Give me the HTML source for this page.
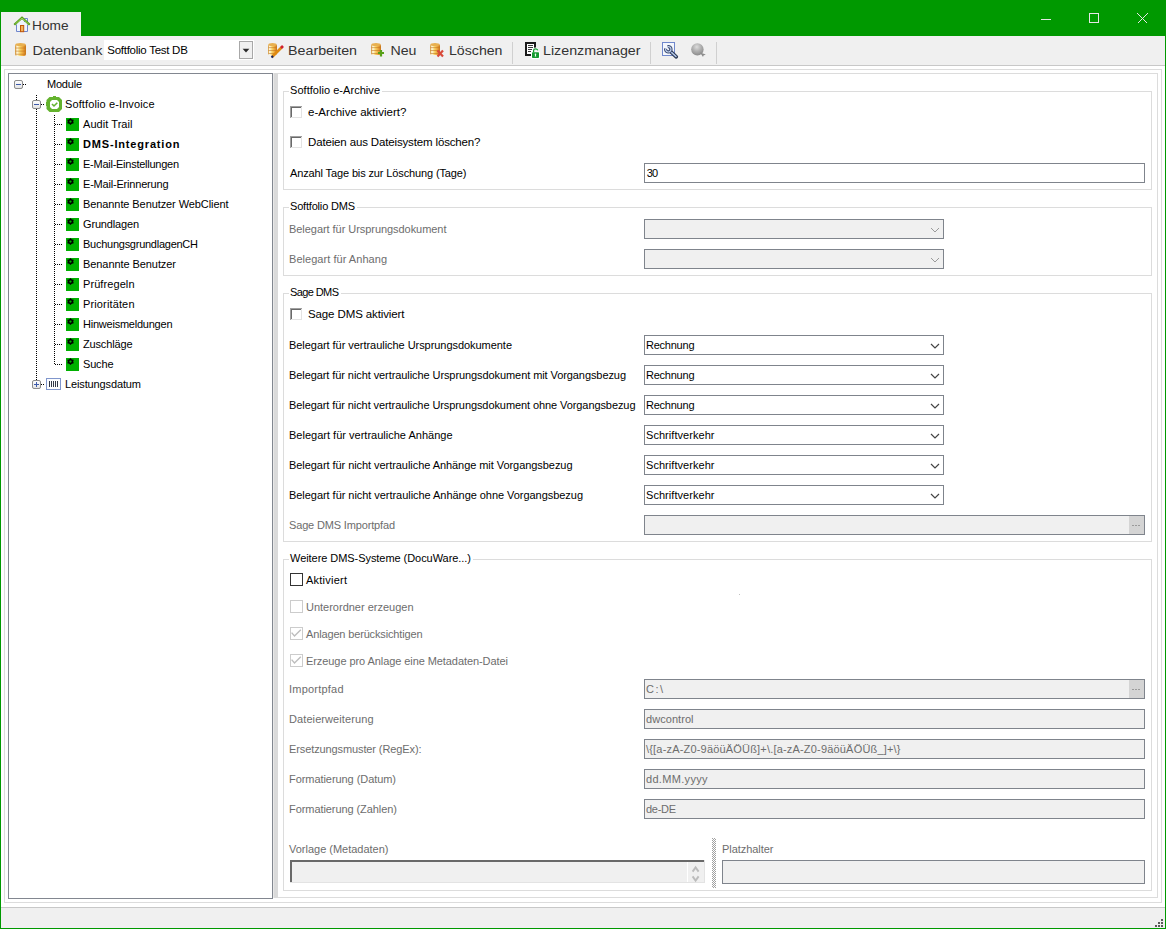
<!DOCTYPE html>
<html><head><meta charset="utf-8"><title>Softfolio</title>
<style>html,body{margin:0;padding:0;width:1166px;height:929px;overflow:hidden;background:#fff}
svg{display:block} text{font-family:"Liberation Sans", sans-serif;white-space:pre}</style></head>
<body><svg width="1166" height="929" viewBox="0 0 1166 929" shape-rendering="crispEdges">
<rect x="0" y="0" width="1166" height="929" fill="#ffffff"/>
<rect x="0" y="0" width="1166" height="36" fill="#009900"/>
<rect x="1" y="12" width="80" height="24" fill="#f0f0f0"/>
<rect x="1041" y="19" width="10" height="1" fill="#e6e6e6"/>
<rect x="1089" y="13" width="10" height="1" fill="#e6e6e6"/>
<rect x="1089" y="22" width="10" height="1" fill="#e6e6e6"/>
<rect x="1089" y="13" width="1" height="10" fill="#e6e6e6"/>
<rect x="1098" y="13" width="1" height="10" fill="#e6e6e6"/>
<path d="M1137.5 13.5 L1147.5 23.5 M1147.5 13.5 L1137.5 23.5" stroke="#e6e6e6" stroke-width="1"/>
<rect x="1" y="36" width="1164" height="29" fill="#f0f0f0"/>
<rect x="1" y="65" width="1164" height="1" fill="#c8c8c8"/>
<rect x="1" y="907" width="1164" height="1" fill="#c8c8c8"/>
<rect x="1" y="908" width="1164" height="20" fill="#f0f0f0"/>
<rect x="0" y="0" width="1" height="929" fill="#009900"/>
<rect x="1165" y="0" width="1" height="929" fill="#009900"/>
<rect x="0" y="928" width="1166" height="1" fill="#009900"/>
<rect x="1161" y="919" width="2" height="2" fill="#5a5a5a"/>
<rect x="1158" y="922" width="2" height="2" fill="#5a5a5a"/>
<rect x="1161" y="922" width="2" height="2" fill="#5a5a5a"/>
<rect x="1155" y="925" width="2" height="2" fill="#5a5a5a"/>
<rect x="1158" y="925" width="2" height="2" fill="#5a5a5a"/>
<rect x="1161" y="925" width="2" height="2" fill="#5a5a5a"/>
<rect x="4" y="69" width="1158" height="1" fill="#dcdcdc"/>
<rect x="4" y="902" width="1158" height="1" fill="#dcdcdc"/>
<rect x="4" y="69" width="1" height="834" fill="#dcdcdc"/>
<rect x="1161" y="69" width="1" height="834" fill="#dcdcdc"/>
<rect x="8" y="73" width="265" height="826" fill="#ffffff"/>
<rect x="8" y="73" width="265" height="1" fill="#828790"/>
<rect x="8" y="898" width="265" height="1" fill="#828790"/>
<rect x="8" y="73" width="1" height="826" fill="#828790"/>
<rect x="272" y="73" width="1" height="826" fill="#828790"/>
<rect x="273" y="73" width="1" height="825" fill="#e8e8e8"/>
<rect x="274" y="73" width="4" height="825" fill="#dadada"/>
<rect x="278" y="73" width="880" height="1" fill="#dcdcdc"/>
<rect x="1157" y="73" width="1" height="825" fill="#dcdcdc"/>
<rect x="278" y="897" width="880" height="1" fill="#dcdcdc"/>
<g shape-rendering="geometricPrecision"><path d="M16.5 24 L22 19 L27.5 24 V31.5 H16.5 Z" fill="#eef3fc"/><path d="M16.5 24.5 V31.5 H27.5 V24.5" fill="none" stroke="#6f86cc" stroke-width="1"/><path d="M24.5 22 V18.5 H27.5 V23" fill="#f4f6fc" stroke="#6f86cc" stroke-width="1"/><path d="M14.3 24.8 L22 17.8 L29.7 24.8" fill="none" stroke="#4f9818" stroke-width="2.2"/><path d="M15.3 24 L22 18 L28.7 24" fill="none" stroke="#b4e45a" stroke-width="0.8"/><rect x="20.5" y="25.5" width="3.2" height="6.2" fill="#f2b458" stroke="#c0560c" stroke-width="1"/></g>
<text x="32" y="30" font-size="12.5" fill="#333333" textLength="36.5" lengthAdjust="spacingAndGlyphs">Home</text>
<g shape-rendering="geometricPrecision" transform="translate(15,43)"><defs><linearGradient id="gd15" x1="0" x2="1" y1="0" y2="0"><stop offset="0" stop-color="#d08a20"/><stop offset="0.18" stop-color="#fffbe4"/><stop offset="0.45" stop-color="#f8d468"/><stop offset="0.7" stop-color="#eeaa40"/><stop offset="1" stop-color="#c87418"/></linearGradient></defs><rect x="0" y="1" width="11" height="12" rx="2" fill="url(#gd15)"/><ellipse cx="5.5" cy="1.5" rx="5.0" ry="1.5" fill="#e8b050"/><rect x="0.5" y="4.62" width="10" height="0.8" fill="#c07020" opacity="0.7"/><rect x="0.5" y="7.700000000000001" width="10" height="0.8" fill="#c07020" opacity="0.7"/><rect x="0.5" y="10.780000000000001" width="10" height="0.8" fill="#c07020" opacity="0.7"/></g>
<text x="32.5" y="55" font-size="12.5" fill="#333333" textLength="70.0" lengthAdjust="spacingAndGlyphs">Datenbank</text>
<rect x="104" y="40" width="150" height="20" fill="#ffffff"/>
<rect x="239" y="41" width="14" height="18" fill="#f0f0f0"/>
<rect x="239" y="41" width="14" height="1" fill="#a8a8a8"/>
<rect x="239" y="58" width="14" height="1" fill="#a8a8a8"/>
<rect x="239" y="41" width="1" height="18" fill="#a8a8a8"/>
<rect x="252" y="41" width="1" height="18" fill="#a8a8a8"/>
<path d="M242.6 48.8 H249.4 L246 52.4 Z" fill="#2a2a2a" shape-rendering="geometricPrecision"/>
<text x="107.3" y="54" font-size="11.5" fill="#000" textLength="80.5" lengthAdjust="spacing">Softfolio Test DB</text>
<g shape-rendering="geometricPrecision" transform="translate(268,43)"><defs><linearGradient id="gd268" x1="0" x2="1" y1="0" y2="0"><stop offset="0" stop-color="#d08a20"/><stop offset="0.18" stop-color="#fffbe4"/><stop offset="0.45" stop-color="#f8d468"/><stop offset="0.7" stop-color="#eeaa40"/><stop offset="1" stop-color="#c87418"/></linearGradient></defs><rect x="0" y="1" width="9" height="11" rx="2" fill="url(#gd268)"/><ellipse cx="4.5" cy="1.5" rx="4.0" ry="1.5" fill="#e8b050"/><rect x="0.5" y="4.29" width="8" height="0.8" fill="#c07020" opacity="0.7"/><rect x="0.5" y="7.15" width="8" height="0.8" fill="#c07020" opacity="0.7"/><rect x="0.5" y="10.01" width="8" height="0.8" fill="#c07020" opacity="0.7"/></g>
<g shape-rendering="geometricPrecision"><path d="M272 57 L281.5 47.5" stroke="#e08a10" stroke-width="2.6"/><path d="M281 48 L283 46" stroke="#d02030" stroke-width="2.6"/><path d="M271.5 57.5 L273 56" stroke="#102060" stroke-width="2"/></g>
<text x="288" y="55" font-size="12.5" fill="#333333" textLength="69.0" lengthAdjust="spacingAndGlyphs">Bearbeiten</text>
<g shape-rendering="geometricPrecision" transform="translate(371,43)"><defs><linearGradient id="gd371" x1="0" x2="1" y1="0" y2="0"><stop offset="0" stop-color="#d08a20"/><stop offset="0.18" stop-color="#fffbe4"/><stop offset="0.45" stop-color="#f8d468"/><stop offset="0.7" stop-color="#eeaa40"/><stop offset="1" stop-color="#c87418"/></linearGradient></defs><rect x="0" y="1" width="10" height="11" rx="2" fill="url(#gd371)"/><ellipse cx="5.0" cy="1.5" rx="4.5" ry="1.5" fill="#e8b050"/><rect x="0.5" y="4.29" width="9" height="0.8" fill="#c07020" opacity="0.7"/><rect x="0.5" y="7.15" width="9" height="0.8" fill="#c07020" opacity="0.7"/><rect x="0.5" y="10.01" width="9" height="0.8" fill="#c07020" opacity="0.7"/></g>
<path d="M378 53 H384 M381 50 V56.5" stroke="#58a018" stroke-width="2.2" shape-rendering="geometricPrecision"/>
<text x="390.5" y="55" font-size="12.5" fill="#333333" textLength="26.0" lengthAdjust="spacingAndGlyphs">Neu</text>
<g shape-rendering="geometricPrecision" transform="translate(430,43)"><defs><linearGradient id="gd430" x1="0" x2="1" y1="0" y2="0"><stop offset="0" stop-color="#d08a20"/><stop offset="0.18" stop-color="#fffbe4"/><stop offset="0.45" stop-color="#f8d468"/><stop offset="0.7" stop-color="#eeaa40"/><stop offset="1" stop-color="#c87418"/></linearGradient></defs><rect x="0" y="1" width="10" height="11" rx="2" fill="url(#gd430)"/><ellipse cx="5.0" cy="1.5" rx="4.5" ry="1.5" fill="#e8b050"/><rect x="0.5" y="4.29" width="9" height="0.8" fill="#c07020" opacity="0.7"/><rect x="0.5" y="7.15" width="9" height="0.8" fill="#c07020" opacity="0.7"/><rect x="0.5" y="10.01" width="9" height="0.8" fill="#c07020" opacity="0.7"/></g>
<path d="M437.5 50.5 L443 56.5 M443 50.5 L437.5 56.5" stroke="#d84a3a" stroke-width="2.2" shape-rendering="geometricPrecision"/>
<text x="449" y="55" font-size="12.5" fill="#333333" textLength="53.5" lengthAdjust="spacingAndGlyphs">Löschen</text>
<rect x="512" y="42" width="1" height="22" fill="#d0d0d0"/>
<rect x="650" y="42" width="1" height="22" fill="#d0d0d0"/>
<rect x="716" y="42" width="1" height="22" fill="#d0d0d0"/>
<rect x="525" y="42" width="11" height="2" fill="#1a1a1a"/>
<rect x="525" y="42" width="2" height="14" fill="#1a1a1a"/>
<rect x="534" y="42" width="2" height="6" fill="#1a1a1a"/>
<rect x="525" y="54" width="6" height="2" fill="#1a1a1a"/>
<rect x="527" y="44" width="7" height="10" fill="#ffffff"/>
<rect x="528" y="45" width="5" height="1" fill="#3a3a3a"/>
<rect x="528" y="47" width="5" height="1" fill="#3a3a3a"/>
<rect x="528" y="49" width="4" height="1" fill="#3a3a3a"/>
<rect x="528" y="51" width="3" height="1" fill="#3a3a3a"/>
<g shape-rendering="geometricPrecision"><path d="M533.6 52.5 V50.3 Q533.6 48.8 535.6 48.8 Q537.2 48.8 537.8 50.3" fill="none" stroke="#ffffff" stroke-width="2.6"/><rect x="531" y="51.5" width="9" height="7.5" rx="1" fill="#ffffff"/><path d="M533.6 52.5 V50.3 Q533.6 48.8 535.6 48.8 Q537.2 48.8 537.8 50.3" fill="none" stroke="#149a30" stroke-width="1.3"/><rect x="532" y="52.2" width="7" height="5.8" rx="0.8" fill="#149a30"/><path d="M535.5 53.8 L536.3 56.5 H534.7 Z" fill="#ffffff"/><circle cx="535.5" cy="54.3" r="0.8" fill="#fff"/></g>
<text x="543" y="55" font-size="12.5" fill="#333333" textLength="97.5" lengthAdjust="spacingAndGlyphs">Lizenzmanager</text>
<g shape-rendering="geometricPrecision"><rect x="662.5" y="42.5" width="12" height="13" fill="#f4f7fd" stroke="#7088cc" stroke-width="1"/><path d="M670.2 51.2 L676.3 56.8" stroke="#2c3852" stroke-width="3.6" stroke-linecap="round"/><path d="M670.4 51.4 L676 56.5" stroke="#b4c8ec" stroke-width="1.5" stroke-linecap="round"/><path d="M667.6 46.69 A2.7 2.7 0 1 1 665.69 48.6" fill="none" stroke="#34446a" stroke-width="3.2"/><path d="M667.6 46.69 A2.7 2.7 0 1 1 665.69 48.6" fill="none" stroke="#c4d4f0" stroke-width="1.2"/></g>
<g shape-rendering="geometricPrecision"><defs><radialGradient id="gg" cx="0.45" cy="0.3" r="0.7"><stop offset="0" stop-color="#dcdcdc"/><stop offset="0.5" stop-color="#b0b0b0"/><stop offset="1" stop-color="#8a8a8a"/></radialGradient></defs><circle cx="697.4" cy="49.4" r="6.2" fill="url(#gg)"/><path d="M700 52.5 L705.8 54.5 L703.5 55.5 L703 57 Z" fill="#8c8c8c"/></g>
<g shape-rendering="geometricPrecision"><defs><linearGradient id="eb80" x1="0" x2="0" y1="0" y2="1"><stop offset="0" stop-color="#ffffff"/><stop offset="1" stop-color="#e2e2e2"/></linearGradient></defs><rect x="14.5" y="80.5" width="8" height="8" rx="1.5" fill="url(#eb80)" stroke="#8c8c8c" stroke-width="1"/></g>
<rect x="16" y="84" width="5" height="1" fill="#3d5aaa"/>
<rect x="23" y="84" width="1" height="1" fill="#000"/>
<rect x="25" y="84" width="1" height="1" fill="#000"/>
<text x="47" y="88" font-size="11" fill="#000000" textLength="35.0" lengthAdjust="spacing">Module</text>
<rect x="36" y="95" width="1" height="1" fill="#000"/>
<rect x="36" y="97" width="1" height="1" fill="#000"/>
<rect x="36" y="99" width="1" height="1" fill="#000"/>
<g shape-rendering="geometricPrecision"><defs><linearGradient id="eb100" x1="0" x2="0" y1="0" y2="1"><stop offset="0" stop-color="#ffffff"/><stop offset="1" stop-color="#e2e2e2"/></linearGradient></defs><rect x="32.5" y="100.5" width="8" height="8" rx="1.5" fill="url(#eb100)" stroke="#8c8c8c" stroke-width="1"/></g>
<rect x="34" y="104" width="5" height="1" fill="#3d5aaa"/>
<rect x="41" y="104" width="1" height="1" fill="#000"/>
<rect x="43" y="104" width="1" height="1" fill="#000"/>
<g shape-rendering="geometricPrecision"><path d="M49.5 97 H59 L62 100 V109 L59 112 H49.5 L46.5 109 V100 Z" fill="#64b32e"/><rect x="53" y="96" width="3" height="1" fill="#64b32e"/><rect x="46" y="102" width="1" height="4" fill="#64b32e"/><path d="M52 100 H57 L59 102 V107 L57 109 H52 L50 107 V102 Z" fill="#ffffff"/><path d="M52 104 L54 106 L57.3 102.8" stroke="#64b32e" stroke-width="1.6" fill="none"/></g>
<text x="65" y="108" font-size="11" fill="#000000" textLength="89.5" lengthAdjust="spacing">Softfolio e-Invoice</text>
<rect x="36" y="109" width="1" height="1" fill="#000"/>
<rect x="36" y="111" width="1" height="1" fill="#000"/>
<rect x="36" y="113" width="1" height="1" fill="#000"/>
<rect x="36" y="115" width="1" height="1" fill="#000"/>
<rect x="36" y="117" width="1" height="1" fill="#000"/>
<rect x="36" y="119" width="1" height="1" fill="#000"/>
<rect x="36" y="121" width="1" height="1" fill="#000"/>
<rect x="36" y="123" width="1" height="1" fill="#000"/>
<rect x="36" y="125" width="1" height="1" fill="#000"/>
<rect x="36" y="127" width="1" height="1" fill="#000"/>
<rect x="36" y="129" width="1" height="1" fill="#000"/>
<rect x="36" y="131" width="1" height="1" fill="#000"/>
<rect x="36" y="133" width="1" height="1" fill="#000"/>
<rect x="36" y="135" width="1" height="1" fill="#000"/>
<rect x="36" y="137" width="1" height="1" fill="#000"/>
<rect x="36" y="139" width="1" height="1" fill="#000"/>
<rect x="36" y="141" width="1" height="1" fill="#000"/>
<rect x="36" y="143" width="1" height="1" fill="#000"/>
<rect x="36" y="145" width="1" height="1" fill="#000"/>
<rect x="36" y="147" width="1" height="1" fill="#000"/>
<rect x="36" y="149" width="1" height="1" fill="#000"/>
<rect x="36" y="151" width="1" height="1" fill="#000"/>
<rect x="36" y="153" width="1" height="1" fill="#000"/>
<rect x="36" y="155" width="1" height="1" fill="#000"/>
<rect x="36" y="157" width="1" height="1" fill="#000"/>
<rect x="36" y="159" width="1" height="1" fill="#000"/>
<rect x="36" y="161" width="1" height="1" fill="#000"/>
<rect x="36" y="163" width="1" height="1" fill="#000"/>
<rect x="36" y="165" width="1" height="1" fill="#000"/>
<rect x="36" y="167" width="1" height="1" fill="#000"/>
<rect x="36" y="169" width="1" height="1" fill="#000"/>
<rect x="36" y="171" width="1" height="1" fill="#000"/>
<rect x="36" y="173" width="1" height="1" fill="#000"/>
<rect x="36" y="175" width="1" height="1" fill="#000"/>
<rect x="36" y="177" width="1" height="1" fill="#000"/>
<rect x="36" y="179" width="1" height="1" fill="#000"/>
<rect x="36" y="181" width="1" height="1" fill="#000"/>
<rect x="36" y="183" width="1" height="1" fill="#000"/>
<rect x="36" y="185" width="1" height="1" fill="#000"/>
<rect x="36" y="187" width="1" height="1" fill="#000"/>
<rect x="36" y="189" width="1" height="1" fill="#000"/>
<rect x="36" y="191" width="1" height="1" fill="#000"/>
<rect x="36" y="193" width="1" height="1" fill="#000"/>
<rect x="36" y="195" width="1" height="1" fill="#000"/>
<rect x="36" y="197" width="1" height="1" fill="#000"/>
<rect x="36" y="199" width="1" height="1" fill="#000"/>
<rect x="36" y="201" width="1" height="1" fill="#000"/>
<rect x="36" y="203" width="1" height="1" fill="#000"/>
<rect x="36" y="205" width="1" height="1" fill="#000"/>
<rect x="36" y="207" width="1" height="1" fill="#000"/>
<rect x="36" y="209" width="1" height="1" fill="#000"/>
<rect x="36" y="211" width="1" height="1" fill="#000"/>
<rect x="36" y="213" width="1" height="1" fill="#000"/>
<rect x="36" y="215" width="1" height="1" fill="#000"/>
<rect x="36" y="217" width="1" height="1" fill="#000"/>
<rect x="36" y="219" width="1" height="1" fill="#000"/>
<rect x="36" y="221" width="1" height="1" fill="#000"/>
<rect x="36" y="223" width="1" height="1" fill="#000"/>
<rect x="36" y="225" width="1" height="1" fill="#000"/>
<rect x="36" y="227" width="1" height="1" fill="#000"/>
<rect x="36" y="229" width="1" height="1" fill="#000"/>
<rect x="36" y="231" width="1" height="1" fill="#000"/>
<rect x="36" y="233" width="1" height="1" fill="#000"/>
<rect x="36" y="235" width="1" height="1" fill="#000"/>
<rect x="36" y="237" width="1" height="1" fill="#000"/>
<rect x="36" y="239" width="1" height="1" fill="#000"/>
<rect x="36" y="241" width="1" height="1" fill="#000"/>
<rect x="36" y="243" width="1" height="1" fill="#000"/>
<rect x="36" y="245" width="1" height="1" fill="#000"/>
<rect x="36" y="247" width="1" height="1" fill="#000"/>
<rect x="36" y="249" width="1" height="1" fill="#000"/>
<rect x="36" y="251" width="1" height="1" fill="#000"/>
<rect x="36" y="253" width="1" height="1" fill="#000"/>
<rect x="36" y="255" width="1" height="1" fill="#000"/>
<rect x="36" y="257" width="1" height="1" fill="#000"/>
<rect x="36" y="259" width="1" height="1" fill="#000"/>
<rect x="36" y="261" width="1" height="1" fill="#000"/>
<rect x="36" y="263" width="1" height="1" fill="#000"/>
<rect x="36" y="265" width="1" height="1" fill="#000"/>
<rect x="36" y="267" width="1" height="1" fill="#000"/>
<rect x="36" y="269" width="1" height="1" fill="#000"/>
<rect x="36" y="271" width="1" height="1" fill="#000"/>
<rect x="36" y="273" width="1" height="1" fill="#000"/>
<rect x="36" y="275" width="1" height="1" fill="#000"/>
<rect x="36" y="277" width="1" height="1" fill="#000"/>
<rect x="36" y="279" width="1" height="1" fill="#000"/>
<rect x="36" y="281" width="1" height="1" fill="#000"/>
<rect x="36" y="283" width="1" height="1" fill="#000"/>
<rect x="36" y="285" width="1" height="1" fill="#000"/>
<rect x="36" y="287" width="1" height="1" fill="#000"/>
<rect x="36" y="289" width="1" height="1" fill="#000"/>
<rect x="36" y="291" width="1" height="1" fill="#000"/>
<rect x="36" y="293" width="1" height="1" fill="#000"/>
<rect x="36" y="295" width="1" height="1" fill="#000"/>
<rect x="36" y="297" width="1" height="1" fill="#000"/>
<rect x="36" y="299" width="1" height="1" fill="#000"/>
<rect x="36" y="301" width="1" height="1" fill="#000"/>
<rect x="36" y="303" width="1" height="1" fill="#000"/>
<rect x="36" y="305" width="1" height="1" fill="#000"/>
<rect x="36" y="307" width="1" height="1" fill="#000"/>
<rect x="36" y="309" width="1" height="1" fill="#000"/>
<rect x="36" y="311" width="1" height="1" fill="#000"/>
<rect x="36" y="313" width="1" height="1" fill="#000"/>
<rect x="36" y="315" width="1" height="1" fill="#000"/>
<rect x="36" y="317" width="1" height="1" fill="#000"/>
<rect x="36" y="319" width="1" height="1" fill="#000"/>
<rect x="36" y="321" width="1" height="1" fill="#000"/>
<rect x="36" y="323" width="1" height="1" fill="#000"/>
<rect x="36" y="325" width="1" height="1" fill="#000"/>
<rect x="36" y="327" width="1" height="1" fill="#000"/>
<rect x="36" y="329" width="1" height="1" fill="#000"/>
<rect x="36" y="331" width="1" height="1" fill="#000"/>
<rect x="36" y="333" width="1" height="1" fill="#000"/>
<rect x="36" y="335" width="1" height="1" fill="#000"/>
<rect x="36" y="337" width="1" height="1" fill="#000"/>
<rect x="36" y="339" width="1" height="1" fill="#000"/>
<rect x="36" y="341" width="1" height="1" fill="#000"/>
<rect x="36" y="343" width="1" height="1" fill="#000"/>
<rect x="36" y="345" width="1" height="1" fill="#000"/>
<rect x="36" y="347" width="1" height="1" fill="#000"/>
<rect x="36" y="349" width="1" height="1" fill="#000"/>
<rect x="36" y="351" width="1" height="1" fill="#000"/>
<rect x="36" y="353" width="1" height="1" fill="#000"/>
<rect x="36" y="355" width="1" height="1" fill="#000"/>
<rect x="36" y="357" width="1" height="1" fill="#000"/>
<rect x="36" y="359" width="1" height="1" fill="#000"/>
<rect x="36" y="361" width="1" height="1" fill="#000"/>
<rect x="36" y="363" width="1" height="1" fill="#000"/>
<rect x="36" y="365" width="1" height="1" fill="#000"/>
<rect x="36" y="367" width="1" height="1" fill="#000"/>
<rect x="36" y="369" width="1" height="1" fill="#000"/>
<rect x="36" y="371" width="1" height="1" fill="#000"/>
<rect x="36" y="373" width="1" height="1" fill="#000"/>
<rect x="36" y="375" width="1" height="1" fill="#000"/>
<rect x="36" y="377" width="1" height="1" fill="#000"/>
<rect x="36" y="379" width="1" height="1" fill="#000"/>
<rect x="55" y="124" width="1" height="1" fill="#000"/>
<rect x="57" y="124" width="1" height="1" fill="#000"/>
<rect x="59" y="124" width="1" height="1" fill="#000"/>
<rect x="61" y="124" width="1" height="1" fill="#000"/>
<rect x="66" y="118" width="13" height="13" fill="#00b000"/>
<g shape-rendering="geometricPrecision" transform="translate(70.5,121.6) scale(0.95,0.88)"><path d="M0.00 -4.00 L1.43 -2.47 L3.46 -2.00 L2.85 0.00 L3.46 2.00 L1.43 2.47 L0.00 4.00 L-1.42 2.47 L-3.46 2.00 L-2.85 0.00 L-3.46 -2.00 L-1.43 -2.47 Z" fill="#000"/><circle cx="0" cy="0" r="1.2" fill="#00b000"/></g>
<text x="83" y="128" font-size="11" fill="#000000" textLength="49.5" lengthAdjust="spacing">Audit Trail</text>
<rect x="55" y="144" width="1" height="1" fill="#000"/>
<rect x="57" y="144" width="1" height="1" fill="#000"/>
<rect x="59" y="144" width="1" height="1" fill="#000"/>
<rect x="61" y="144" width="1" height="1" fill="#000"/>
<rect x="66" y="138" width="13" height="13" fill="#00b000"/>
<g shape-rendering="geometricPrecision" transform="translate(70.5,141.6) scale(0.95,0.88)"><path d="M0.00 -4.00 L1.43 -2.47 L3.46 -2.00 L2.85 0.00 L3.46 2.00 L1.43 2.47 L0.00 4.00 L-1.42 2.47 L-3.46 2.00 L-2.85 0.00 L-3.46 -2.00 L-1.43 -2.47 Z" fill="#000"/><circle cx="0" cy="0" r="1.2" fill="#00b000"/></g>
<text x="83" y="148" font-size="11" fill="#000000" textLength="96.5" lengthAdjust="spacing" font-weight="bold">DMS-Integration</text>
<rect x="55" y="164" width="1" height="1" fill="#000"/>
<rect x="57" y="164" width="1" height="1" fill="#000"/>
<rect x="59" y="164" width="1" height="1" fill="#000"/>
<rect x="61" y="164" width="1" height="1" fill="#000"/>
<rect x="66" y="158" width="13" height="13" fill="#00b000"/>
<g shape-rendering="geometricPrecision" transform="translate(70.5,161.6) scale(0.95,0.88)"><path d="M0.00 -4.00 L1.43 -2.47 L3.46 -2.00 L2.85 0.00 L3.46 2.00 L1.43 2.47 L0.00 4.00 L-1.42 2.47 L-3.46 2.00 L-2.85 0.00 L-3.46 -2.00 L-1.43 -2.47 Z" fill="#000"/><circle cx="0" cy="0" r="1.2" fill="#00b000"/></g>
<text x="83" y="168" font-size="11" fill="#000000" textLength="96.0" lengthAdjust="spacing">E-Mail-Einstellungen</text>
<rect x="55" y="184" width="1" height="1" fill="#000"/>
<rect x="57" y="184" width="1" height="1" fill="#000"/>
<rect x="59" y="184" width="1" height="1" fill="#000"/>
<rect x="61" y="184" width="1" height="1" fill="#000"/>
<rect x="66" y="178" width="13" height="13" fill="#00b000"/>
<g shape-rendering="geometricPrecision" transform="translate(70.5,181.6) scale(0.95,0.88)"><path d="M0.00 -4.00 L1.43 -2.47 L3.46 -2.00 L2.85 0.00 L3.46 2.00 L1.43 2.47 L0.00 4.00 L-1.42 2.47 L-3.46 2.00 L-2.85 0.00 L-3.46 -2.00 L-1.43 -2.47 Z" fill="#000"/><circle cx="0" cy="0" r="1.2" fill="#00b000"/></g>
<text x="83" y="188" font-size="11" fill="#000000" textLength="85.5" lengthAdjust="spacing">E-Mail-Erinnerung</text>
<rect x="55" y="204" width="1" height="1" fill="#000"/>
<rect x="57" y="204" width="1" height="1" fill="#000"/>
<rect x="59" y="204" width="1" height="1" fill="#000"/>
<rect x="61" y="204" width="1" height="1" fill="#000"/>
<rect x="66" y="198" width="13" height="13" fill="#00b000"/>
<g shape-rendering="geometricPrecision" transform="translate(70.5,201.6) scale(0.95,0.88)"><path d="M0.00 -4.00 L1.43 -2.47 L3.46 -2.00 L2.85 0.00 L3.46 2.00 L1.43 2.47 L0.00 4.00 L-1.42 2.47 L-3.46 2.00 L-2.85 0.00 L-3.46 -2.00 L-1.43 -2.47 Z" fill="#000"/><circle cx="0" cy="0" r="1.2" fill="#00b000"/></g>
<text x="83" y="208" font-size="11" fill="#000000" textLength="145.5" lengthAdjust="spacing">Benannte Benutzer WebClient</text>
<rect x="55" y="224" width="1" height="1" fill="#000"/>
<rect x="57" y="224" width="1" height="1" fill="#000"/>
<rect x="59" y="224" width="1" height="1" fill="#000"/>
<rect x="61" y="224" width="1" height="1" fill="#000"/>
<rect x="66" y="218" width="13" height="13" fill="#00b000"/>
<g shape-rendering="geometricPrecision" transform="translate(70.5,221.6) scale(0.95,0.88)"><path d="M0.00 -4.00 L1.43 -2.47 L3.46 -2.00 L2.85 0.00 L3.46 2.00 L1.43 2.47 L0.00 4.00 L-1.42 2.47 L-3.46 2.00 L-2.85 0.00 L-3.46 -2.00 L-1.43 -2.47 Z" fill="#000"/><circle cx="0" cy="0" r="1.2" fill="#00b000"/></g>
<text x="83" y="228" font-size="11" fill="#000000" textLength="56.0" lengthAdjust="spacing">Grundlagen</text>
<rect x="55" y="244" width="1" height="1" fill="#000"/>
<rect x="57" y="244" width="1" height="1" fill="#000"/>
<rect x="59" y="244" width="1" height="1" fill="#000"/>
<rect x="61" y="244" width="1" height="1" fill="#000"/>
<rect x="66" y="238" width="13" height="13" fill="#00b000"/>
<g shape-rendering="geometricPrecision" transform="translate(70.5,241.6) scale(0.95,0.88)"><path d="M0.00 -4.00 L1.43 -2.47 L3.46 -2.00 L2.85 0.00 L3.46 2.00 L1.43 2.47 L0.00 4.00 L-1.42 2.47 L-3.46 2.00 L-2.85 0.00 L-3.46 -2.00 L-1.43 -2.47 Z" fill="#000"/><circle cx="0" cy="0" r="1.2" fill="#00b000"/></g>
<text x="83" y="248" font-size="11" fill="#000000" textLength="115.0" lengthAdjust="spacing">BuchungsgrundlagenCH</text>
<rect x="55" y="264" width="1" height="1" fill="#000"/>
<rect x="57" y="264" width="1" height="1" fill="#000"/>
<rect x="59" y="264" width="1" height="1" fill="#000"/>
<rect x="61" y="264" width="1" height="1" fill="#000"/>
<rect x="66" y="258" width="13" height="13" fill="#00b000"/>
<g shape-rendering="geometricPrecision" transform="translate(70.5,261.6) scale(0.95,0.88)"><path d="M0.00 -4.00 L1.43 -2.47 L3.46 -2.00 L2.85 0.00 L3.46 2.00 L1.43 2.47 L0.00 4.00 L-1.42 2.47 L-3.46 2.00 L-2.85 0.00 L-3.46 -2.00 L-1.43 -2.47 Z" fill="#000"/><circle cx="0" cy="0" r="1.2" fill="#00b000"/></g>
<text x="83" y="268" font-size="11" fill="#000000" textLength="93.0" lengthAdjust="spacing">Benannte Benutzer</text>
<rect x="55" y="284" width="1" height="1" fill="#000"/>
<rect x="57" y="284" width="1" height="1" fill="#000"/>
<rect x="59" y="284" width="1" height="1" fill="#000"/>
<rect x="61" y="284" width="1" height="1" fill="#000"/>
<rect x="66" y="278" width="13" height="13" fill="#00b000"/>
<g shape-rendering="geometricPrecision" transform="translate(70.5,281.6) scale(0.95,0.88)"><path d="M0.00 -4.00 L1.43 -2.47 L3.46 -2.00 L2.85 0.00 L3.46 2.00 L1.43 2.47 L0.00 4.00 L-1.42 2.47 L-3.46 2.00 L-2.85 0.00 L-3.46 -2.00 L-1.43 -2.47 Z" fill="#000"/><circle cx="0" cy="0" r="1.2" fill="#00b000"/></g>
<text x="83" y="288" font-size="11" fill="#000000" textLength="51.5" lengthAdjust="spacing">Prüfregeln</text>
<rect x="55" y="304" width="1" height="1" fill="#000"/>
<rect x="57" y="304" width="1" height="1" fill="#000"/>
<rect x="59" y="304" width="1" height="1" fill="#000"/>
<rect x="61" y="304" width="1" height="1" fill="#000"/>
<rect x="66" y="298" width="13" height="13" fill="#00b000"/>
<g shape-rendering="geometricPrecision" transform="translate(70.5,301.6) scale(0.95,0.88)"><path d="M0.00 -4.00 L1.43 -2.47 L3.46 -2.00 L2.85 0.00 L3.46 2.00 L1.43 2.47 L0.00 4.00 L-1.42 2.47 L-3.46 2.00 L-2.85 0.00 L-3.46 -2.00 L-1.43 -2.47 Z" fill="#000"/><circle cx="0" cy="0" r="1.2" fill="#00b000"/></g>
<text x="83" y="308" font-size="11" fill="#000000" textLength="51.5" lengthAdjust="spacing">Prioritäten</text>
<rect x="55" y="324" width="1" height="1" fill="#000"/>
<rect x="57" y="324" width="1" height="1" fill="#000"/>
<rect x="59" y="324" width="1" height="1" fill="#000"/>
<rect x="61" y="324" width="1" height="1" fill="#000"/>
<rect x="66" y="318" width="13" height="13" fill="#00b000"/>
<g shape-rendering="geometricPrecision" transform="translate(70.5,321.6) scale(0.95,0.88)"><path d="M0.00 -4.00 L1.43 -2.47 L3.46 -2.00 L2.85 0.00 L3.46 2.00 L1.43 2.47 L0.00 4.00 L-1.42 2.47 L-3.46 2.00 L-2.85 0.00 L-3.46 -2.00 L-1.43 -2.47 Z" fill="#000"/><circle cx="0" cy="0" r="1.2" fill="#00b000"/></g>
<text x="83" y="328" font-size="11" fill="#000000" textLength="89.5" lengthAdjust="spacing">Hinweismeldungen</text>
<rect x="55" y="344" width="1" height="1" fill="#000"/>
<rect x="57" y="344" width="1" height="1" fill="#000"/>
<rect x="59" y="344" width="1" height="1" fill="#000"/>
<rect x="61" y="344" width="1" height="1" fill="#000"/>
<rect x="66" y="338" width="13" height="13" fill="#00b000"/>
<g shape-rendering="geometricPrecision" transform="translate(70.5,341.6) scale(0.95,0.88)"><path d="M0.00 -4.00 L1.43 -2.47 L3.46 -2.00 L2.85 0.00 L3.46 2.00 L1.43 2.47 L0.00 4.00 L-1.42 2.47 L-3.46 2.00 L-2.85 0.00 L-3.46 -2.00 L-1.43 -2.47 Z" fill="#000"/><circle cx="0" cy="0" r="1.2" fill="#00b000"/></g>
<text x="83" y="348" font-size="11" fill="#000000" textLength="49.5" lengthAdjust="spacing">Zuschläge</text>
<rect x="55" y="364" width="1" height="1" fill="#000"/>
<rect x="57" y="364" width="1" height="1" fill="#000"/>
<rect x="59" y="364" width="1" height="1" fill="#000"/>
<rect x="61" y="364" width="1" height="1" fill="#000"/>
<rect x="66" y="358" width="13" height="13" fill="#00b000"/>
<g shape-rendering="geometricPrecision" transform="translate(70.5,361.6) scale(0.95,0.88)"><path d="M0.00 -4.00 L1.43 -2.47 L3.46 -2.00 L2.85 0.00 L3.46 2.00 L1.43 2.47 L0.00 4.00 L-1.42 2.47 L-3.46 2.00 L-2.85 0.00 L-3.46 -2.00 L-1.43 -2.47 Z" fill="#000"/><circle cx="0" cy="0" r="1.2" fill="#00b000"/></g>
<text x="83" y="368" font-size="11" fill="#000000" textLength="30.5" lengthAdjust="spacing">Suche</text>
<rect x="54" y="115" width="1" height="1" fill="#000"/>
<rect x="54" y="117" width="1" height="1" fill="#000"/>
<rect x="54" y="119" width="1" height="1" fill="#000"/>
<rect x="54" y="121" width="1" height="1" fill="#000"/>
<rect x="54" y="123" width="1" height="1" fill="#000"/>
<rect x="54" y="125" width="1" height="1" fill="#000"/>
<rect x="54" y="127" width="1" height="1" fill="#000"/>
<rect x="54" y="129" width="1" height="1" fill="#000"/>
<rect x="54" y="131" width="1" height="1" fill="#000"/>
<rect x="54" y="133" width="1" height="1" fill="#000"/>
<rect x="54" y="135" width="1" height="1" fill="#000"/>
<rect x="54" y="137" width="1" height="1" fill="#000"/>
<rect x="54" y="139" width="1" height="1" fill="#000"/>
<rect x="54" y="141" width="1" height="1" fill="#000"/>
<rect x="54" y="143" width="1" height="1" fill="#000"/>
<rect x="54" y="145" width="1" height="1" fill="#000"/>
<rect x="54" y="147" width="1" height="1" fill="#000"/>
<rect x="54" y="149" width="1" height="1" fill="#000"/>
<rect x="54" y="151" width="1" height="1" fill="#000"/>
<rect x="54" y="153" width="1" height="1" fill="#000"/>
<rect x="54" y="155" width="1" height="1" fill="#000"/>
<rect x="54" y="157" width="1" height="1" fill="#000"/>
<rect x="54" y="159" width="1" height="1" fill="#000"/>
<rect x="54" y="161" width="1" height="1" fill="#000"/>
<rect x="54" y="163" width="1" height="1" fill="#000"/>
<rect x="54" y="165" width="1" height="1" fill="#000"/>
<rect x="54" y="167" width="1" height="1" fill="#000"/>
<rect x="54" y="169" width="1" height="1" fill="#000"/>
<rect x="54" y="171" width="1" height="1" fill="#000"/>
<rect x="54" y="173" width="1" height="1" fill="#000"/>
<rect x="54" y="175" width="1" height="1" fill="#000"/>
<rect x="54" y="177" width="1" height="1" fill="#000"/>
<rect x="54" y="179" width="1" height="1" fill="#000"/>
<rect x="54" y="181" width="1" height="1" fill="#000"/>
<rect x="54" y="183" width="1" height="1" fill="#000"/>
<rect x="54" y="185" width="1" height="1" fill="#000"/>
<rect x="54" y="187" width="1" height="1" fill="#000"/>
<rect x="54" y="189" width="1" height="1" fill="#000"/>
<rect x="54" y="191" width="1" height="1" fill="#000"/>
<rect x="54" y="193" width="1" height="1" fill="#000"/>
<rect x="54" y="195" width="1" height="1" fill="#000"/>
<rect x="54" y="197" width="1" height="1" fill="#000"/>
<rect x="54" y="199" width="1" height="1" fill="#000"/>
<rect x="54" y="201" width="1" height="1" fill="#000"/>
<rect x="54" y="203" width="1" height="1" fill="#000"/>
<rect x="54" y="205" width="1" height="1" fill="#000"/>
<rect x="54" y="207" width="1" height="1" fill="#000"/>
<rect x="54" y="209" width="1" height="1" fill="#000"/>
<rect x="54" y="211" width="1" height="1" fill="#000"/>
<rect x="54" y="213" width="1" height="1" fill="#000"/>
<rect x="54" y="215" width="1" height="1" fill="#000"/>
<rect x="54" y="217" width="1" height="1" fill="#000"/>
<rect x="54" y="219" width="1" height="1" fill="#000"/>
<rect x="54" y="221" width="1" height="1" fill="#000"/>
<rect x="54" y="223" width="1" height="1" fill="#000"/>
<rect x="54" y="225" width="1" height="1" fill="#000"/>
<rect x="54" y="227" width="1" height="1" fill="#000"/>
<rect x="54" y="229" width="1" height="1" fill="#000"/>
<rect x="54" y="231" width="1" height="1" fill="#000"/>
<rect x="54" y="233" width="1" height="1" fill="#000"/>
<rect x="54" y="235" width="1" height="1" fill="#000"/>
<rect x="54" y="237" width="1" height="1" fill="#000"/>
<rect x="54" y="239" width="1" height="1" fill="#000"/>
<rect x="54" y="241" width="1" height="1" fill="#000"/>
<rect x="54" y="243" width="1" height="1" fill="#000"/>
<rect x="54" y="245" width="1" height="1" fill="#000"/>
<rect x="54" y="247" width="1" height="1" fill="#000"/>
<rect x="54" y="249" width="1" height="1" fill="#000"/>
<rect x="54" y="251" width="1" height="1" fill="#000"/>
<rect x="54" y="253" width="1" height="1" fill="#000"/>
<rect x="54" y="255" width="1" height="1" fill="#000"/>
<rect x="54" y="257" width="1" height="1" fill="#000"/>
<rect x="54" y="259" width="1" height="1" fill="#000"/>
<rect x="54" y="261" width="1" height="1" fill="#000"/>
<rect x="54" y="263" width="1" height="1" fill="#000"/>
<rect x="54" y="265" width="1" height="1" fill="#000"/>
<rect x="54" y="267" width="1" height="1" fill="#000"/>
<rect x="54" y="269" width="1" height="1" fill="#000"/>
<rect x="54" y="271" width="1" height="1" fill="#000"/>
<rect x="54" y="273" width="1" height="1" fill="#000"/>
<rect x="54" y="275" width="1" height="1" fill="#000"/>
<rect x="54" y="277" width="1" height="1" fill="#000"/>
<rect x="54" y="279" width="1" height="1" fill="#000"/>
<rect x="54" y="281" width="1" height="1" fill="#000"/>
<rect x="54" y="283" width="1" height="1" fill="#000"/>
<rect x="54" y="285" width="1" height="1" fill="#000"/>
<rect x="54" y="287" width="1" height="1" fill="#000"/>
<rect x="54" y="289" width="1" height="1" fill="#000"/>
<rect x="54" y="291" width="1" height="1" fill="#000"/>
<rect x="54" y="293" width="1" height="1" fill="#000"/>
<rect x="54" y="295" width="1" height="1" fill="#000"/>
<rect x="54" y="297" width="1" height="1" fill="#000"/>
<rect x="54" y="299" width="1" height="1" fill="#000"/>
<rect x="54" y="301" width="1" height="1" fill="#000"/>
<rect x="54" y="303" width="1" height="1" fill="#000"/>
<rect x="54" y="305" width="1" height="1" fill="#000"/>
<rect x="54" y="307" width="1" height="1" fill="#000"/>
<rect x="54" y="309" width="1" height="1" fill="#000"/>
<rect x="54" y="311" width="1" height="1" fill="#000"/>
<rect x="54" y="313" width="1" height="1" fill="#000"/>
<rect x="54" y="315" width="1" height="1" fill="#000"/>
<rect x="54" y="317" width="1" height="1" fill="#000"/>
<rect x="54" y="319" width="1" height="1" fill="#000"/>
<rect x="54" y="321" width="1" height="1" fill="#000"/>
<rect x="54" y="323" width="1" height="1" fill="#000"/>
<rect x="54" y="325" width="1" height="1" fill="#000"/>
<rect x="54" y="327" width="1" height="1" fill="#000"/>
<rect x="54" y="329" width="1" height="1" fill="#000"/>
<rect x="54" y="331" width="1" height="1" fill="#000"/>
<rect x="54" y="333" width="1" height="1" fill="#000"/>
<rect x="54" y="335" width="1" height="1" fill="#000"/>
<rect x="54" y="337" width="1" height="1" fill="#000"/>
<rect x="54" y="339" width="1" height="1" fill="#000"/>
<rect x="54" y="341" width="1" height="1" fill="#000"/>
<rect x="54" y="343" width="1" height="1" fill="#000"/>
<rect x="54" y="345" width="1" height="1" fill="#000"/>
<rect x="54" y="347" width="1" height="1" fill="#000"/>
<rect x="54" y="349" width="1" height="1" fill="#000"/>
<rect x="54" y="351" width="1" height="1" fill="#000"/>
<rect x="54" y="353" width="1" height="1" fill="#000"/>
<rect x="54" y="355" width="1" height="1" fill="#000"/>
<rect x="54" y="357" width="1" height="1" fill="#000"/>
<rect x="54" y="359" width="1" height="1" fill="#000"/>
<rect x="54" y="361" width="1" height="1" fill="#000"/>
<rect x="54" y="363" width="1" height="1" fill="#000"/>
<g shape-rendering="geometricPrecision"><defs><linearGradient id="eb380" x1="0" x2="0" y1="0" y2="1"><stop offset="0" stop-color="#ffffff"/><stop offset="1" stop-color="#e2e2e2"/></linearGradient></defs><rect x="32.5" y="380.5" width="8" height="8" rx="1.5" fill="url(#eb380)" stroke="#8c8c8c" stroke-width="1"/></g>
<rect x="34" y="384" width="5" height="1" fill="#3d5aaa"/>
<rect x="36" y="382" width="1" height="5" fill="#3d5aaa"/>
<rect x="41" y="384" width="1" height="1" fill="#000"/>
<rect x="43" y="384" width="1" height="1" fill="#000"/>
<g shape-rendering="geometricPrecision"><rect x="46.5" y="378.5" width="14" height="11" fill="#fafcff" stroke="#8096cc" stroke-width="1"/></g>
<rect x="49" y="381" width="1" height="6" fill="#303848"/>
<rect x="51" y="381" width="1" height="6" fill="#303848"/>
<rect x="53" y="381" width="1" height="6" fill="#303848"/>
<rect x="55" y="381" width="1" height="6" fill="#303848"/>
<rect x="57" y="381" width="1" height="6" fill="#303848"/>
<text x="65" y="388" font-size="11" fill="#000000" textLength="76.0" lengthAdjust="spacing">Leistungsdatum</text>
<rect x="283" y="91" width="1" height="99" fill="#dcdcdc"/>
<rect x="1151" y="91" width="1" height="99" fill="#dcdcdc"/>
<rect x="283" y="189" width="869" height="1" fill="#dcdcdc"/>
<rect x="283" y="91" width="6" height="1" fill="#dcdcdc"/>
<rect x="382" y="91" width="770" height="1" fill="#dcdcdc"/>
<text x="290" y="94" font-size="11" fill="#000" textLength="90.0" lengthAdjust="spacing">Softfolio e-Archive</text>
<rect x="290" y="106" width="12" height="1" fill="#a0a0a0"/>
<rect x="290" y="106" width="1" height="12" fill="#a0a0a0"/>
<rect x="291" y="107" width="10" height="1" fill="#696969"/>
<rect x="291" y="107" width="1" height="10" fill="#696969"/>
<rect x="292" y="108" width="9" height="9" fill="#ffffff"/>
<rect x="301" y="107" width="1" height="11" fill="#e3e3e3"/>
<rect x="291" y="117" width="11" height="1" fill="#e3e3e3"/>
<text x="308" y="116" font-size="11.5" fill="#000" textLength="98.5" lengthAdjust="spacing">e-Archive aktiviert?</text>
<rect x="290" y="136" width="12" height="1" fill="#a0a0a0"/>
<rect x="290" y="136" width="1" height="12" fill="#a0a0a0"/>
<rect x="291" y="137" width="10" height="1" fill="#696969"/>
<rect x="291" y="137" width="1" height="10" fill="#696969"/>
<rect x="292" y="138" width="9" height="9" fill="#ffffff"/>
<rect x="301" y="137" width="1" height="11" fill="#e3e3e3"/>
<rect x="291" y="147" width="11" height="1" fill="#e3e3e3"/>
<text x="308" y="146" font-size="11.5" fill="#000" textLength="172.5" lengthAdjust="spacing">Dateien aus Dateisystem löschen?</text>
<text x="290" y="177" font-size="11" fill="#000" textLength="176.5" lengthAdjust="spacing">Anzahl Tage bis zur Löschung (Tage)</text>
<rect x="644" y="163" width="501" height="20" fill="#ffffff"/>
<rect x="644" y="163" width="501" height="1" fill="#7f848c"/>
<rect x="644" y="182" width="501" height="1" fill="#7f848c"/>
<rect x="644" y="163" width="1" height="20" fill="#7f848c"/>
<rect x="1144" y="163" width="1" height="20" fill="#7f848c"/>
<text x="646.8" y="177" font-size="11" fill="#000" textLength="11.4" lengthAdjust="spacing">30</text>
<rect x="283" y="207" width="1" height="69" fill="#dcdcdc"/>
<rect x="1151" y="207" width="1" height="69" fill="#dcdcdc"/>
<rect x="283" y="275" width="869" height="1" fill="#dcdcdc"/>
<rect x="283" y="207" width="6" height="1" fill="#dcdcdc"/>
<rect x="357" y="207" width="795" height="1" fill="#dcdcdc"/>
<text x="290" y="210" font-size="11" fill="#000" textLength="65.0" lengthAdjust="spacing">Softfolio DMS</text>
<text x="289" y="233" font-size="11" fill="#6d6d6d" textLength="157.5" lengthAdjust="spacing">Belegart für Ursprungsdokument</text>
<rect x="644" y="219" width="300" height="20" fill="#f0f0f0"/>
<rect x="644" y="219" width="300" height="1" fill="#7f848c"/>
<rect x="644" y="238" width="300" height="1" fill="#7f848c"/>
<rect x="644" y="219" width="1" height="20" fill="#7f848c"/>
<rect x="943" y="219" width="1" height="20" fill="#7f848c"/>
<path d="M931 228 L935 232 L939 228" stroke="#9a9a9a" stroke-width="1.0" fill="none" shape-rendering="geometricPrecision"/>
<text x="289" y="263" font-size="11" fill="#6d6d6d" textLength="98.0" lengthAdjust="spacing">Belegart für Anhang</text>
<rect x="644" y="249" width="300" height="20" fill="#f0f0f0"/>
<rect x="644" y="249" width="300" height="1" fill="#7f848c"/>
<rect x="644" y="268" width="300" height="1" fill="#7f848c"/>
<rect x="644" y="249" width="1" height="20" fill="#7f848c"/>
<rect x="943" y="249" width="1" height="20" fill="#7f848c"/>
<path d="M931 258 L935 262 L939 258" stroke="#9a9a9a" stroke-width="1.0" fill="none" shape-rendering="geometricPrecision"/>
<rect x="283" y="293" width="1" height="249" fill="#dcdcdc"/>
<rect x="1151" y="293" width="1" height="249" fill="#dcdcdc"/>
<rect x="283" y="541" width="869" height="1" fill="#dcdcdc"/>
<rect x="283" y="293" width="6" height="1" fill="#dcdcdc"/>
<rect x="341" y="293" width="811" height="1" fill="#dcdcdc"/>
<text x="290" y="296" font-size="11" fill="#000" textLength="49.0" lengthAdjust="spacing">Sage DMS</text>
<rect x="290" y="308" width="12" height="1" fill="#a0a0a0"/>
<rect x="290" y="308" width="1" height="12" fill="#a0a0a0"/>
<rect x="291" y="309" width="10" height="1" fill="#696969"/>
<rect x="291" y="309" width="1" height="10" fill="#696969"/>
<rect x="292" y="310" width="9" height="9" fill="#ffffff"/>
<rect x="301" y="309" width="1" height="11" fill="#e3e3e3"/>
<rect x="291" y="319" width="11" height="1" fill="#e3e3e3"/>
<text x="308" y="318" font-size="11.5" fill="#000" textLength="96.5" lengthAdjust="spacing">Sage DMS aktiviert</text>
<text x="289" y="349" font-size="11" fill="#000" textLength="223.0" lengthAdjust="spacing">Belegart für vertrauliche Ursprungsdokumente</text>
<rect x="644" y="335" width="300" height="20" fill="#ffffff"/>
<rect x="644" y="335" width="300" height="1" fill="#7f848c"/>
<rect x="644" y="354" width="300" height="1" fill="#7f848c"/>
<rect x="644" y="335" width="1" height="20" fill="#7f848c"/>
<rect x="943" y="335" width="1" height="20" fill="#7f848c"/>
<path d="M931 344 L935 348 L939 344" stroke="#444" stroke-width="1.2" fill="none" shape-rendering="geometricPrecision"/>
<text x="646" y="349" font-size="11" fill="#000" textLength="48.5" lengthAdjust="spacing">Rechnung</text>
<text x="289" y="379" font-size="11" fill="#000" textLength="337.0" lengthAdjust="spacing">Belegart für nicht vertrauliche Ursprungsdokument mit Vorgangsbezug</text>
<rect x="644" y="365" width="300" height="20" fill="#ffffff"/>
<rect x="644" y="365" width="300" height="1" fill="#7f848c"/>
<rect x="644" y="384" width="300" height="1" fill="#7f848c"/>
<rect x="644" y="365" width="1" height="20" fill="#7f848c"/>
<rect x="943" y="365" width="1" height="20" fill="#7f848c"/>
<path d="M931 374 L935 378 L939 374" stroke="#444" stroke-width="1.2" fill="none" shape-rendering="geometricPrecision"/>
<text x="646" y="379" font-size="11" fill="#000" textLength="48.5" lengthAdjust="spacing">Rechnung</text>
<text x="289" y="409" font-size="11" fill="#000" textLength="346.5" lengthAdjust="spacing">Belegart für nicht vertrauliche Ursprungsdokument ohne Vorgangsbezug</text>
<rect x="644" y="395" width="300" height="20" fill="#ffffff"/>
<rect x="644" y="395" width="300" height="1" fill="#7f848c"/>
<rect x="644" y="414" width="300" height="1" fill="#7f848c"/>
<rect x="644" y="395" width="1" height="20" fill="#7f848c"/>
<rect x="943" y="395" width="1" height="20" fill="#7f848c"/>
<path d="M931 404 L935 408 L939 404" stroke="#444" stroke-width="1.2" fill="none" shape-rendering="geometricPrecision"/>
<text x="646" y="409" font-size="11" fill="#000" textLength="48.5" lengthAdjust="spacing">Rechnung</text>
<text x="289" y="439" font-size="11" fill="#000" textLength="163.5" lengthAdjust="spacing">Belegart für vertrauliche Anhänge</text>
<rect x="644" y="425" width="300" height="20" fill="#ffffff"/>
<rect x="644" y="425" width="300" height="1" fill="#7f848c"/>
<rect x="644" y="444" width="300" height="1" fill="#7f848c"/>
<rect x="644" y="425" width="1" height="20" fill="#7f848c"/>
<rect x="943" y="425" width="1" height="20" fill="#7f848c"/>
<path d="M931 434 L935 438 L939 434" stroke="#444" stroke-width="1.2" fill="none" shape-rendering="geometricPrecision"/>
<text x="646" y="439" font-size="11" fill="#000" textLength="68.5" lengthAdjust="spacing">Schriftverkehr</text>
<text x="289" y="469" font-size="11" fill="#000" textLength="283.5" lengthAdjust="spacing">Belegart für nicht vertrauliche Anhänge mit Vorgangsbezug</text>
<rect x="644" y="455" width="300" height="20" fill="#ffffff"/>
<rect x="644" y="455" width="300" height="1" fill="#7f848c"/>
<rect x="644" y="474" width="300" height="1" fill="#7f848c"/>
<rect x="644" y="455" width="1" height="20" fill="#7f848c"/>
<rect x="943" y="455" width="1" height="20" fill="#7f848c"/>
<path d="M931 464 L935 468 L939 464" stroke="#444" stroke-width="1.2" fill="none" shape-rendering="geometricPrecision"/>
<text x="646" y="469" font-size="11" fill="#000" textLength="68.5" lengthAdjust="spacing">Schriftverkehr</text>
<text x="289" y="499" font-size="11" fill="#000" textLength="294.0" lengthAdjust="spacing">Belegart für nicht vertrauliche Anhänge ohne Vorgangsbezug</text>
<rect x="644" y="485" width="300" height="20" fill="#ffffff"/>
<rect x="644" y="485" width="300" height="1" fill="#7f848c"/>
<rect x="644" y="504" width="300" height="1" fill="#7f848c"/>
<rect x="644" y="485" width="1" height="20" fill="#7f848c"/>
<rect x="943" y="485" width="1" height="20" fill="#7f848c"/>
<path d="M931 494 L935 498 L939 494" stroke="#444" stroke-width="1.2" fill="none" shape-rendering="geometricPrecision"/>
<text x="646" y="499" font-size="11" fill="#000" textLength="68.5" lengthAdjust="spacing">Schriftverkehr</text>
<text x="289" y="529" font-size="11" fill="#6d6d6d" textLength="106.0" lengthAdjust="spacing">Sage DMS Importpfad</text>
<rect x="644" y="515" width="501" height="20" fill="#f0f0f0"/>
<rect x="644" y="515" width="501" height="1" fill="#7f848c"/>
<rect x="644" y="534" width="501" height="1" fill="#7f848c"/>
<rect x="644" y="515" width="1" height="20" fill="#7f848c"/>
<rect x="1144" y="515" width="1" height="20" fill="#7f848c"/>
<rect x="1129" y="516" width="15" height="18" fill="#d4d4d4"/>
<rect x="1132" y="525" width="2" height="1" fill="#9a9a9a"/>
<rect x="1135" y="525" width="2" height="1" fill="#9a9a9a"/>
<rect x="1138" y="525" width="2" height="1" fill="#9a9a9a"/>
<rect x="283" y="559" width="1" height="332" fill="#dcdcdc"/>
<rect x="1151" y="559" width="1" height="332" fill="#dcdcdc"/>
<rect x="283" y="890" width="869" height="1" fill="#dcdcdc"/>
<rect x="283" y="559" width="6" height="1" fill="#dcdcdc"/>
<rect x="473" y="559" width="679" height="1" fill="#dcdcdc"/>
<text x="290" y="562" font-size="11" fill="#000" textLength="181.0" lengthAdjust="spacing">Weitere DMS-Systeme (DocuWare...)</text>
<rect x="290" y="573" width="13" height="13" fill="#ffffff"/>
<rect x="290" y="573" width="13" height="1" fill="#333333"/>
<rect x="290" y="585" width="13" height="1" fill="#333333"/>
<rect x="290" y="573" width="1" height="13" fill="#333333"/>
<rect x="302" y="573" width="1" height="13" fill="#333333"/>
<text x="306" y="584" font-size="11" fill="#000" textLength="41.0" lengthAdjust="spacing">Aktiviert</text>
<rect x="290" y="600" width="13" height="13" fill="#ffffff"/>
<rect x="290" y="600" width="13" height="1" fill="#cccccc"/>
<rect x="290" y="612" width="13" height="1" fill="#cccccc"/>
<rect x="290" y="600" width="1" height="13" fill="#cccccc"/>
<rect x="302" y="600" width="1" height="13" fill="#cccccc"/>
<text x="306" y="611" font-size="11" fill="#6d6d6d" textLength="107.5" lengthAdjust="spacing">Unterordner erzeugen</text>
<rect x="290" y="627" width="13" height="13" fill="#ffffff"/>
<rect x="290" y="627" width="13" height="1" fill="#cccccc"/>
<rect x="290" y="639" width="13" height="1" fill="#cccccc"/>
<rect x="290" y="627" width="1" height="13" fill="#cccccc"/>
<rect x="302" y="627" width="1" height="13" fill="#cccccc"/>
<path d="M291.6 632.6 L294.5 636 L300.8 629.8" stroke="#bdbdbd" stroke-width="1.4" fill="none" shape-rendering="geometricPrecision"/>
<text x="306" y="638" font-size="11" fill="#6d6d6d" textLength="116.5" lengthAdjust="spacing">Anlagen berücksichtigen</text>
<rect x="290" y="654" width="13" height="13" fill="#ffffff"/>
<rect x="290" y="654" width="13" height="1" fill="#cccccc"/>
<rect x="290" y="666" width="13" height="1" fill="#cccccc"/>
<rect x="290" y="654" width="1" height="13" fill="#cccccc"/>
<rect x="302" y="654" width="1" height="13" fill="#cccccc"/>
<path d="M291.6 659.6 L294.5 663 L300.8 656.8" stroke="#bdbdbd" stroke-width="1.4" fill="none" shape-rendering="geometricPrecision"/>
<text x="306" y="665" font-size="11" fill="#6d6d6d" textLength="202.0" lengthAdjust="spacing">Erzeuge pro Anlage eine Metadaten-Datei</text>
<rect x="739" y="594" width="1" height="1" fill="#c0c0c0"/>
<text x="289" y="693" font-size="11" fill="#6d6d6d" textLength="54.5" lengthAdjust="spacing">Importpfad</text>
<rect x="644" y="679" width="501" height="20" fill="#f0f0f0"/>
<rect x="644" y="679" width="501" height="1" fill="#7f848c"/>
<rect x="644" y="698" width="501" height="1" fill="#7f848c"/>
<rect x="644" y="679" width="1" height="20" fill="#7f848c"/>
<rect x="1144" y="679" width="1" height="20" fill="#7f848c"/>
<text x="646" y="693" font-size="11" fill="#6d6d6d" textLength="17.0" lengthAdjust="spacing">C:\</text>
<text x="289" y="723" font-size="11" fill="#6d6d6d" textLength="84.5" lengthAdjust="spacing">Dateierweiterung</text>
<rect x="644" y="709" width="501" height="20" fill="#f0f0f0"/>
<rect x="644" y="709" width="501" height="1" fill="#7f848c"/>
<rect x="644" y="728" width="501" height="1" fill="#7f848c"/>
<rect x="644" y="709" width="1" height="20" fill="#7f848c"/>
<rect x="1144" y="709" width="1" height="20" fill="#7f848c"/>
<text x="646" y="723" font-size="11" fill="#6d6d6d" textLength="47.5" lengthAdjust="spacing">dwcontrol</text>
<text x="289" y="753" font-size="11" fill="#6d6d6d" textLength="132.5" lengthAdjust="spacing">Ersetzungsmuster (RegEx):</text>
<rect x="644" y="739" width="501" height="20" fill="#f0f0f0"/>
<rect x="644" y="739" width="501" height="1" fill="#7f848c"/>
<rect x="644" y="758" width="501" height="1" fill="#7f848c"/>
<rect x="644" y="739" width="1" height="20" fill="#7f848c"/>
<rect x="1144" y="739" width="1" height="20" fill="#7f848c"/>
<text x="646" y="753" font-size="11" fill="#6d6d6d" textLength="254.5" lengthAdjust="spacing">\{[a-zA-Z0-9äöüÄÖÜß]+\.[a-zA-Z0-9äöüÄÖÜß_]+\}</text>
<text x="289" y="783" font-size="11" fill="#6d6d6d" textLength="107.0" lengthAdjust="spacing">Formatierung (Datum)</text>
<rect x="644" y="769" width="501" height="20" fill="#f0f0f0"/>
<rect x="644" y="769" width="501" height="1" fill="#7f848c"/>
<rect x="644" y="788" width="501" height="1" fill="#7f848c"/>
<rect x="644" y="769" width="1" height="20" fill="#7f848c"/>
<rect x="1144" y="769" width="1" height="20" fill="#7f848c"/>
<text x="646" y="783" font-size="11" fill="#6d6d6d" textLength="61.5" lengthAdjust="spacing">dd.MM.yyyy</text>
<text x="289" y="813" font-size="11" fill="#6d6d6d" textLength="108.0" lengthAdjust="spacing">Formatierung (Zahlen)</text>
<rect x="644" y="799" width="501" height="20" fill="#f0f0f0"/>
<rect x="644" y="799" width="501" height="1" fill="#7f848c"/>
<rect x="644" y="818" width="501" height="1" fill="#7f848c"/>
<rect x="644" y="799" width="1" height="20" fill="#7f848c"/>
<rect x="1144" y="799" width="1" height="20" fill="#7f848c"/>
<text x="646" y="813" font-size="11" fill="#6d6d6d" textLength="30.0" lengthAdjust="spacing">de-DE</text>
<rect x="1129" y="680" width="15" height="18" fill="#d4d4d4"/>
<rect x="1132" y="689" width="2" height="1" fill="#9a9a9a"/>
<rect x="1135" y="689" width="2" height="1" fill="#9a9a9a"/>
<rect x="1138" y="689" width="2" height="1" fill="#9a9a9a"/>
<text x="289" y="853" font-size="11" fill="#6d6d6d" textLength="99.5" lengthAdjust="spacing">Vorlage (Metadaten)</text>
<rect x="290" y="860" width="415" height="23" fill="#f0f0f0"/>
<rect x="290" y="860" width="415" height="2" fill="#696969"/>
<rect x="290" y="860" width="2" height="23" fill="#696969"/>
<rect x="290" y="882" width="415" height="1" fill="#e3e3e3"/>
<rect x="704" y="860" width="1" height="23" fill="#e3e3e3"/>
<rect x="687" y="862" width="1" height="20" fill="#ffffff"/>
<path d="M692.6 871.6 L695.6 867.4 L698.6 871.6 M692.6 876.4 L695.6 880.6 L698.6 876.4" stroke="#bcbcbc" stroke-width="1.9" fill="none" shape-rendering="geometricPrecision"/>
<defs><pattern id="chk" width="2" height="2" patternUnits="userSpaceOnUse"><rect width="1" height="1" fill="#a0a0a0"/><rect x="1" y="1" width="1" height="1" fill="#a0a0a0"/></pattern></defs>
<rect x="712" y="838" width="4" height="50" fill="url(#chk)"/>
<text x="722" y="853" font-size="11" fill="#6d6d6d" textLength="51.5" lengthAdjust="spacing">Platzhalter</text>
<rect x="722" y="860" width="423" height="24" fill="#f0f0f0"/>
<rect x="722" y="860" width="423" height="1" fill="#7f848c"/>
<rect x="722" y="883" width="423" height="1" fill="#7f848c"/>
<rect x="722" y="860" width="1" height="24" fill="#7f848c"/>
<rect x="1144" y="860" width="1" height="24" fill="#7f848c"/>
</svg></body></html>
